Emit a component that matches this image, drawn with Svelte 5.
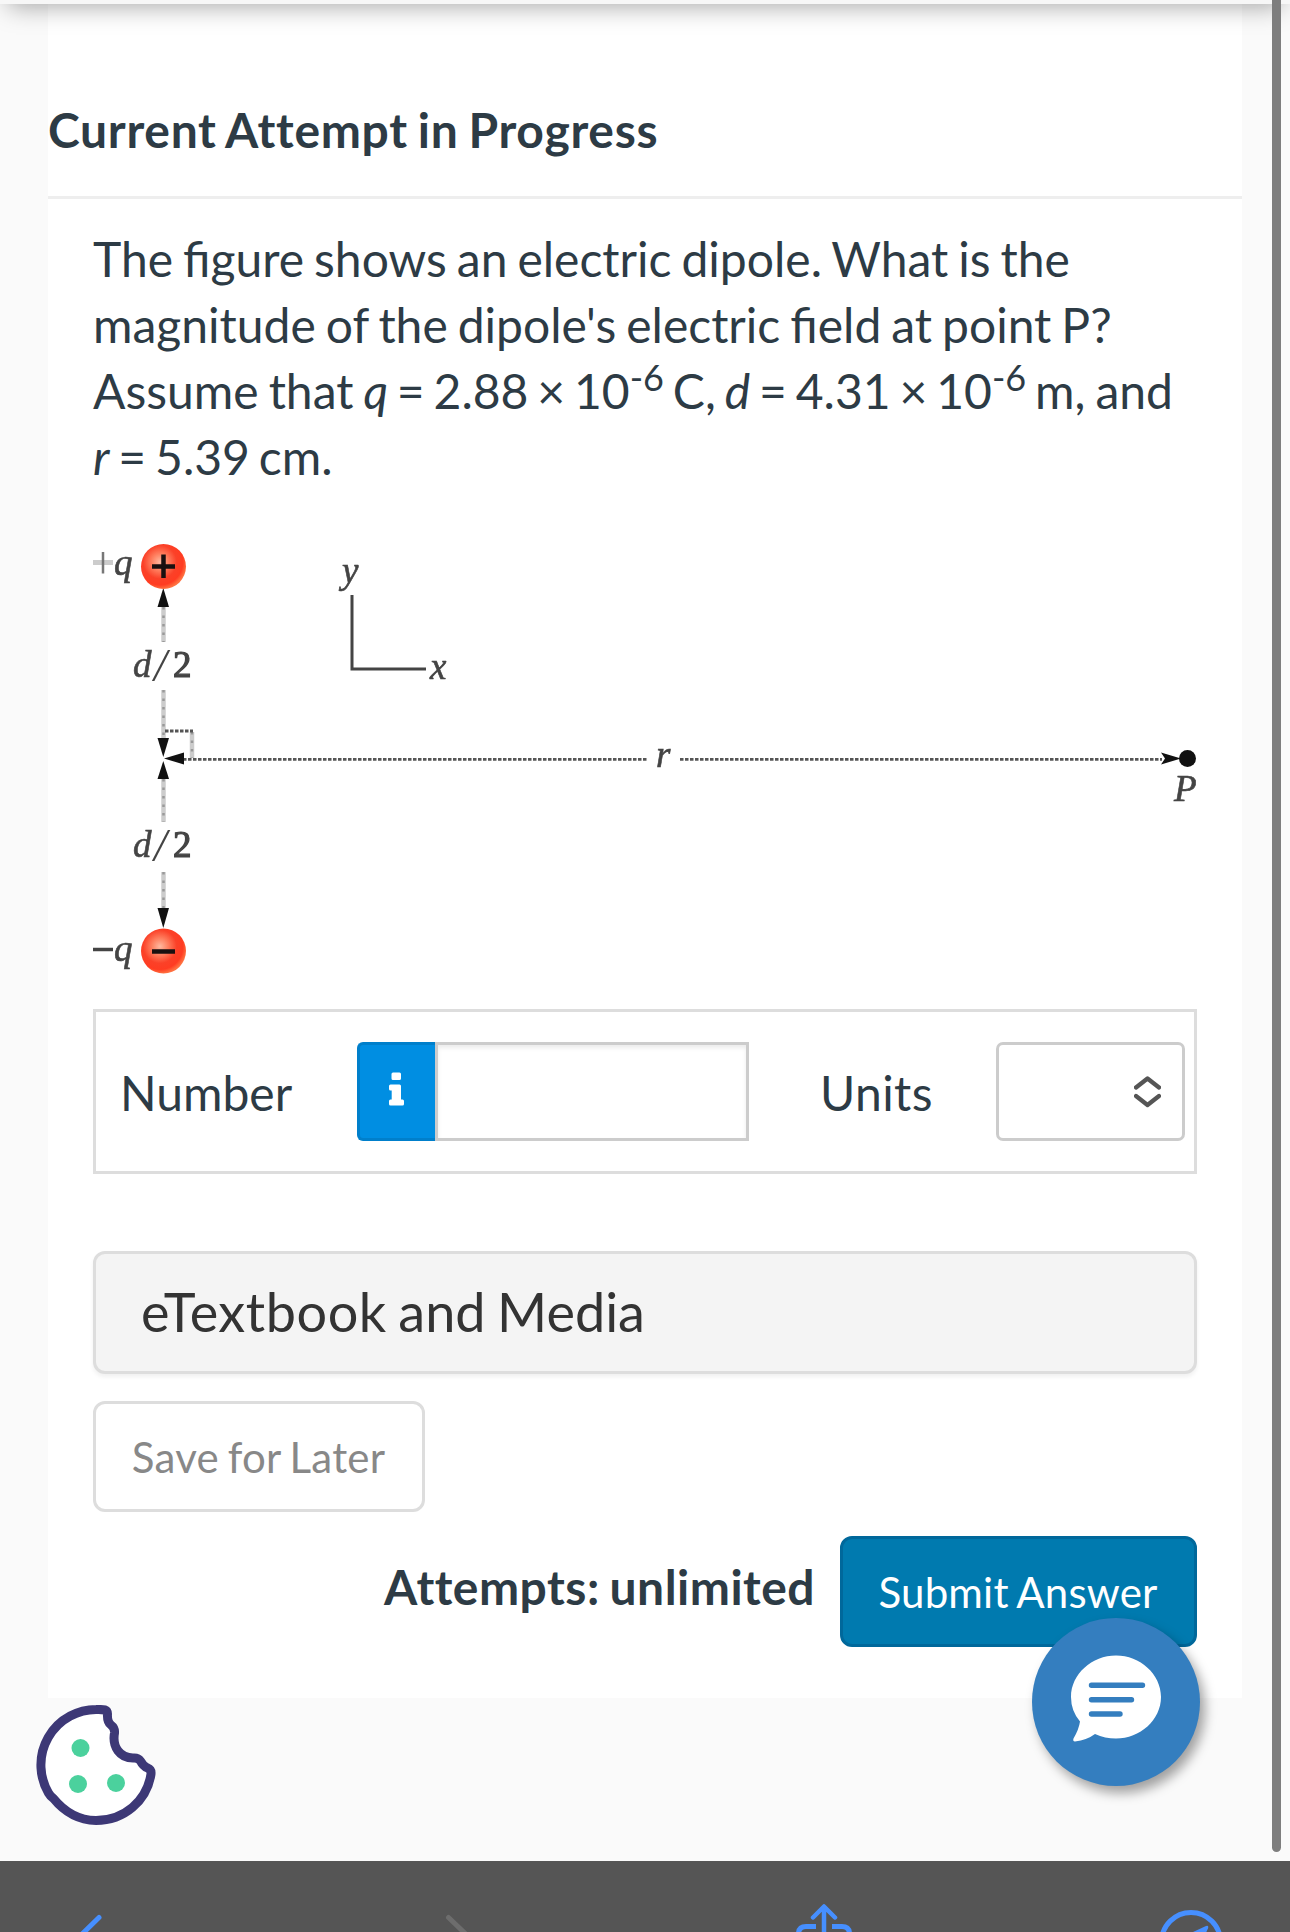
<script>
  let answer = $state('');
</script>

<div class="page">
  <div class="topbar"></div>
  <main class="panel">
    <h2>Current Attempt in Progress</h2>
    <section class="question">
      <p>
        The figure shows an electric dipole. What is the<br />magnitude of the dipole's electric field at point P?<br />Assume that <span class="math"><i>q</i> = 2.88 × 10<sup>-6</sup> C, <i>d</i> = 4.31 × 10<sup>-6</sup> m,</span> and<br /><span class="math"><i>r</i> = 5.39 cm.</span>
      </p>

      <svg class="figure" viewBox="93 540 1104 440" width="1104" height="440">
        <defs>
          <radialGradient id="ball" cx="0.42" cy="0.4" r="0.6">
            <stop offset="0" stop-color="#ffb9a0" />
            <stop offset="0.3" stop-color="#ff8060" />
            <stop offset="0.62" stop-color="#fb4128" />
            <stop offset="0.85" stop-color="#ff3c22" />
            <stop offset="1" stop-color="#ff7040" />
          </radialGradient>
        </defs>
        <g class="shaft">
          <path d="M163.5 607V642M163.5 690V740M163.5 779V822M163.5 872V910" />
          <path d="M192 732V758" />
        </g>
        <g class="dots">
          <path d="M163.5 607V642M163.5 690V740M163.5 779V822M163.5 872V910M192 732V758" />
        </g>
        <path class="fine" d="M165 731H193" />
        <path class="fine" d="M183 759.3H647M680 759.3H1162" />
        <g class="heads">
          <path d="M163.3 588L169 607H157.500Z" />
          <path d="M163.300 757L169 738H157.500Z" />
          <path d="M163.300 761L169 779H157.500Z" />
          <path d="M163.300 928L169 908H157.500Z" />
          <path d="M164 758.500L184 752.500V764.500Z" />
          <path d="M1181 758.500L1161 752.500L1165 758.500L1161 764.500Z" />
          <circle cx="1187.500" cy="758.500" r="8.500" />
        </g>
        <circle cx="163.500" cy="566.500" r="22.500" fill="url(#ball)" />
        <circle cx="163.500" cy="951" r="22.500" fill="url(#ball)" />
        <path class="sign" d="M152 566.500H175M163.500 554.500V578M152 951.500H175" />
        <path class="axes" d="M352 595V669H426" />
        <path class="plus" d="M93 562.500H113" />
        <path class="plusv" d="M103 552V573.500" />
        <path class="minus" d="M93 949.500H113" />
        <g class="labels">
          <text x="114" y="575">q</text>
          <text x="114" y="961">q</text>
          <text x="133" y="677">d</text><text class="slash" x="154" y="681">/</text><text class="up" x="173" y="677">2</text>
          <text x="133" y="857">d</text><text class="slash" x="154" y="861">/</text><text class="up" x="173" y="857">2</text>
          <text x="342" y="583">y</text>
          <text x="430" y="679">x</text>
          <text x="656" y="767">r</text>
          <text x="1174" y="801">P</text>
        </g>
      </svg>

      <div class="form">
        <label for="num">Number</label>
        <div class="entry">
          <span class="info">
            <svg width="16" height="34" viewBox="0 0 16 34">
              <path fill="#fff" d="M4 0.500h6.500q1.500 0 1.500 1.500v4.500q0 1.500-1.500 1.500H4Q2.500 8 2.500 6.500V2Q2.500 0.500 4 0.500zM1.500 12.500h9q1.500 0 1.500 1.500v13.500h1.500q1.500 0 1.500 1.500v3q0 1.500-1.500 1.500h-12Q0 33.500 0 32v-3q0-1.500 1.500-1.500H2.700V18.500H1.500Q0 18.500 0 17v-3q0-1.500 1.500-1.500z" />
            </svg>
          </span>
          <input id="num" bind:value={answer} />
        </div>
        <span class="units">Units</span>
        <div class="select">
          <svg width="27" height="32" viewBox="0 0 27 32">
            <path d="M2 11.500L13.500 2.500L25 11.500M2 20L13.500 29L25 20" fill="none" stroke="#555" stroke-width="4.300" stroke-linecap="round" stroke-linejoin="round" />
          </svg>
        </div>
      </div>

      <div class="media"><span>eTextbook</span> and Media</div>
      <button class="save">Save for Later</button>
      <div class="submit-row">
        <strong>Attempts: unlimited</strong>
        <button class="submit">Submit Answer</button>
      </div>
    </section>
  </main>

  <div class="cookie">
    <svg width="120" height="120" viewBox="0 0 120 120">
      <path d="M60 4.500Q66 4.300 69 5Q71.500 6 71.500 9Q71 17 75 20Q79 23 78.500 28C76 42 84 53 97 53Q102 52.500 104.500 56Q107 61 111.500 63Q115.500 64.500 115 69C111 96 88 115.500 60 115.500Q35 115 17.500 93.500Q14.500 91.500 12.500 88A55.500 55.500 0 0 1 60 4.500Z" fill="#fff" stroke="#3d3876" stroke-width="9" stroke-linejoin="round" />
      <g fill="#4bd19d"><circle cx="44.500" cy="43" r="9" /><circle cx="42" cy="79" r="9" /><circle cx="80" cy="78" r="9" /></g>
    </svg>
  </div>

  <div class="chat">
    <svg width="168" height="168" viewBox="0 0 168 168">
      <path d="M84 37.500C108 37.500 129 56 129 79C129 102 108 120.500 84 120.500Q73 120.500 63 116Q55 122 43 123.500Q40.500 123.500 41.500 120.500Q47 111 48 103.500Q39 93 39 79C39 56 60 37.500 84 37.500Z" fill="#fff" />
      <path d="M59.500 67.300H110.500M59.500 81.700H99.500M59.500 96H88" stroke="#347ebf" stroke-width="5.400" stroke-linecap="round" />
    </svg>
  </div>

  <div class="scrollbar"></div>

  <footer>
    <svg width="1290" height="71" viewBox="0 1861 1290 71" fill="none" stroke="#468fff" stroke-width="5" stroke-linecap="round" stroke-linejoin="round">
      <path d="M99 1917.500L76 1940" />
      <path d="M448.500 1917.500L472 1940" stroke="#6d6d6d" />
      <path stroke-width="4.500" d="M824 1907V1940M813 1917.500L824 1906.500L835 1917.500" />
      <path stroke-linecap="butt" d="M816 1926.500H806Q798.500 1926.500 798.500 1934V1940M832 1926.500H842Q849.500 1926.500 849.500 1934V1940" />
      <circle cx="1191" cy="1942" r="29.500" />
      <path d="M1206 1926Q1209 1925 1208 1928.500L1200 1945L1180 1938Z" fill="#468fff" stroke="none" />
    </svg>
  </footer>
</div>

<style>
  :global(body) { background: #fafafa; }
  * { box-sizing: border-box; }
  .page {
    position: relative;
    width: 1290px;
    height: 1932px;
    overflow: hidden;
    display: flex;
    flex-direction: column;
    background: #fafafa;
    color: #2d3b45;
    font: 48px/66px Lato, "Liberation Sans", sans-serif;
    word-spacing: -2.3px;
  }
  .topbar {
    position: absolute;
    left: 0;
    top: -96px;
    width: 1290px;
    height: 100px;
    background: #f7f7f7;
    box-shadow: 0 10px 24px -8px rgba(0, 0, 0, 0.36);
    z-index: 1;
  }
  .panel { width: 1194px; height: 1698px; margin-left: 48px; background: #fff; flex: none; }
  h2 { margin: 0; height: 199px; padding-top: 97px; border-bottom: 3px solid #eee; font-size: 48px; line-height: 66px; font-weight: 700; letter-spacing: 0.68px; }
  .question { display: flex; flex-direction: column; align-items: flex-start; padding: 27px 45px 0; }
  p { margin: 0; white-space: nowrap; }
  .math { word-spacing: -3.4px; }
  sup { font-size: 36px; line-height: 0; position: relative; top: -18px; vertical-align: baseline; }
  .figure { display: block; margin-top: 50px; flex: none; overflow: visible; filter: blur(0.6px); }
  .shaft { stroke: #ccc; stroke-width: 4.500; fill: none; }
  .dots { stroke: #999; stroke-width: 2.500; stroke-dasharray: 2.500 6; fill: none; }
  .fine { stroke: #555; stroke-width: 2.800; stroke-dasharray: 3.500 1.500; fill: none; }
  .heads { fill: #111; }
  .sign { stroke: #1a1010; stroke-width: 4.500; fill: none; }
  .axes { stroke: #444; stroke-width: 3; fill: none; }
  .plus { stroke: #ccc; stroke-width: 5; }
  .plusv { stroke: #777; stroke-width: 2.500; }
  .minus { stroke: #444; stroke-width: 3.500; }
  .labels { font: italic 37px "Liberation Serif", serif; fill: #444; stroke: #444; stroke-width: 0.600; }
  .up { font-style: normal; stroke-width: 1.200; }
  .slash { font-size: 46px; stroke-width: 0; }
  .form { display: flex; align-items: center; width: 1104px; height: 165px; margin-top: 29px; padding: 0 9px 0 24px; border: 3px solid #ddd; }
  .form label { width: 237px; padding-top: 2px; }
  .entry { display: flex; width: 392px; height: 99px; }
  .info { display: flex; align-items: center; justify-content: center; width: 78px; padding: 0 1px 6px 0; background: #008ee2; border: 3px solid #007fcb; border-right: 0; border-radius: 6px 0 0 6px; }
  input { width: 314px; height: 99px; padding: 0 18px; border: 3px solid #ccc; border-radius: 0; outline: 0; background: #fff; font: inherit; box-shadow: inset 0 3px 4px rgba(0, 0, 0, 0.08); }
  .units { width: 176px; margin-left: 71px; padding-top: 2px; letter-spacing: 0.4px; }
  .select { display: flex; align-items: center; justify-content: flex-end; width: 189px; height: 99px; padding-right: 21px; border: 3px solid #ccc; border-radius: 7px; }
  .media { width: 1104px; height: 123px; margin-top: 77px; padding: 25px 45px; border: 3px solid #ddd; border-radius: 12px; background: #f4f4f4; color: #333; font-size: 54px; box-shadow: 0 3px 4px rgba(0, 0, 0, 0.06); }
  .media span { letter-spacing: 0.55px; }
  button { font-family: inherit; font-size: 42px; line-height: 60px; padding: 1px 0 0; height: 111px; border-radius: 12px; text-align: center; word-spacing: -2px; letter-spacing: 0.2px; }
  .save { width: 332px; padding-right: 1px; margin-top: 27px; border: 3px solid #ddd; background: #fff; color: #888; }
  .submit-row { display: flex; align-self: flex-end; margin-top: 24px; }
  strong { margin-right: 25px; padding-top: 18px; font-weight: 700; letter-spacing: 0.47px; }
  .submit { width: 357px; padding-right: 1px; border: 3px solid #00689b; background: #007aaf; color: #fff; }
  .chat { position: absolute; left: 1032px; top: 1618px; width: 168px; height: 168px; border-radius: 50%; background: #347ebf; box-shadow: 5px 7px 12px rgba(0, 0, 0, 0.36); }
  .cookie { position: absolute; left: 36px; top: 1705px; width: 120px; height: 120px; }
  .chat svg, .cookie svg, footer svg { display: block; }
  .scrollbar { position: absolute; left: 1272px; top: -10px; width: 9px; height: 1862px; border-radius: 5px; background: #7e7e7e; z-index: 2; }
  footer { height: 71px; margin-top: auto; background: #555; }
</style>
